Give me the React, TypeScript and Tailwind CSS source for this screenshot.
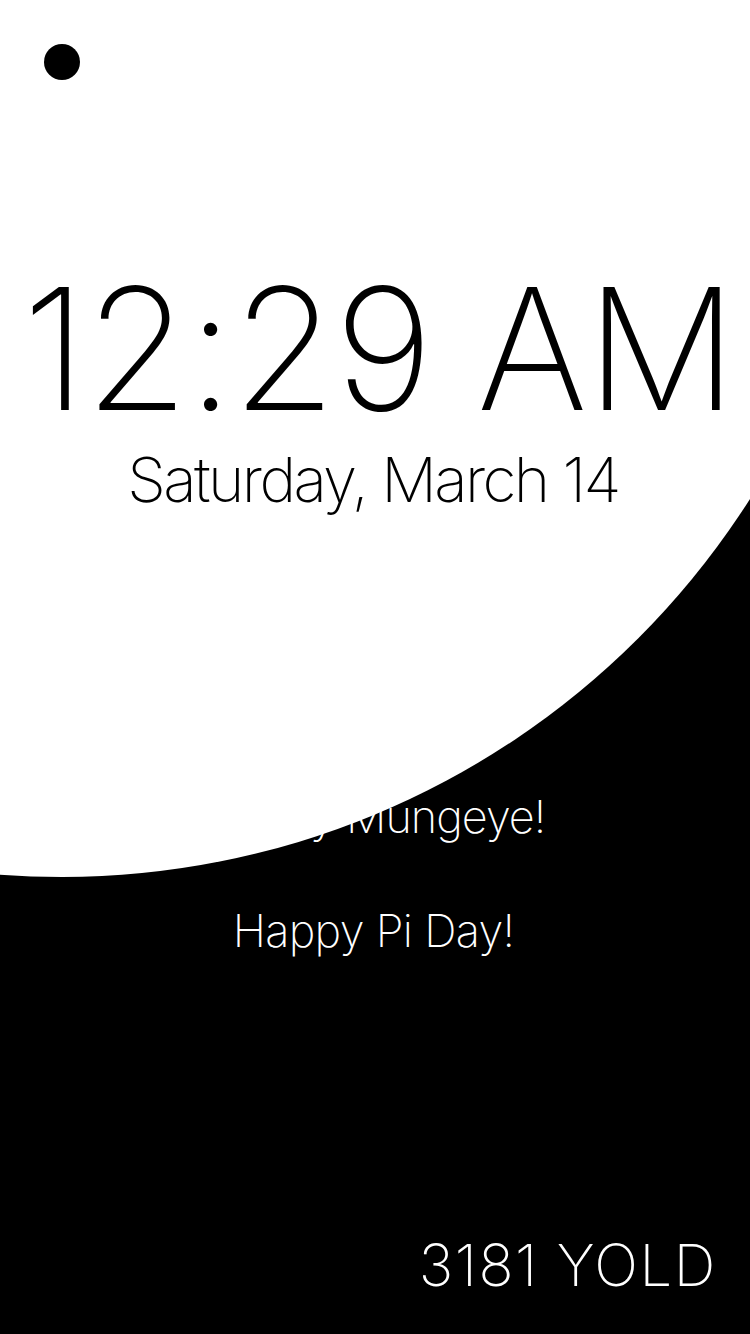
import React from "react";

export default function App() {
  return (
    <div
      className="relative w-[750px] h-[1334px] bg-black overflow-hidden"
      style={{ fontFamily: "Inter, 'Helvetica Neue', Arial, sans-serif" }}
    >
      <div className="absolute left-[-753px] top-[-753px] w-[1630px] h-[1630px] rounded-full bg-white" />
      <div className="absolute left-[44px] top-[44px] w-[36px] h-[36px] rounded-full bg-black" />

      <div className="relative flex flex-col items-center">
        <div className="mt-[264px] pl-[8px] text-[169px] leading-none font-extralight text-black tracking-[-0.011em] whitespace-nowrap">
          12:29 AM
        </div>
        <div className="mt-[16px] pr-[4px] text-[62px] leading-none font-extralight text-black tracking-[-0.042em] whitespace-nowrap">
          Saturday, March 14
        </div>
        <div className="mt-[283px] text-[45px] leading-none font-extralight text-white tracking-[-0.022em] whitespace-nowrap">
          Happy Mungeye!
        </div>
        <div className="mt-[69px] pr-[3px] text-[45px] leading-none font-extralight text-white tracking-[-0.015em] whitespace-nowrap">
          Happy Pi Day!
        </div>
        <div className="self-end mr-[33px] mt-[283px] text-[58px] leading-none font-extralight text-white tracking-[0.028em] whitespace-nowrap">
          3181 YOLD
        </div>
      </div>
    </div>
  );
}
